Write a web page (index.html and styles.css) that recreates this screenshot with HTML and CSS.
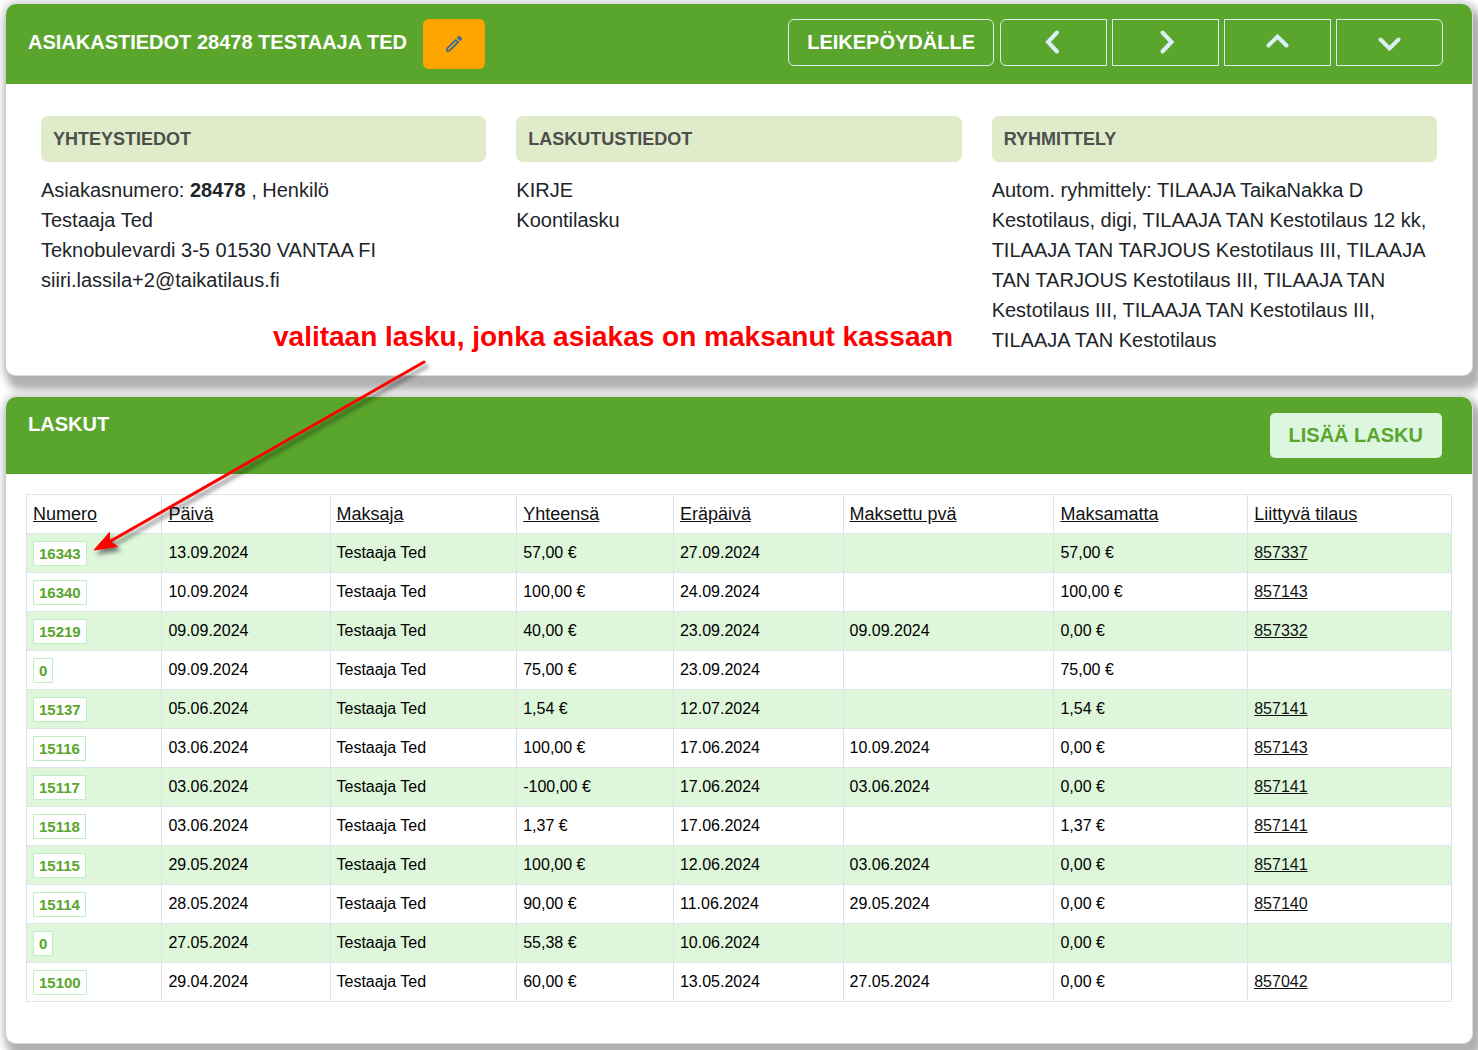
FILE: index.html
```html
<!DOCTYPE html>
<html lang="fi">
<head>
<meta charset="utf-8">
<meta name="viewport" content="width=device-width, initial-scale=1">
<title>Asiakastiedot 28478 Testaaja Ted</title>
<link rel="stylesheet" href="styles.css">
</head>
<body>
<main class="page">
  <section class="card">
    <header class="card-header">
      <h2 class="card-title">ASIAKASTIEDOT 28478 TESTAAJA TED</h2>
      <button class="btn-edit" type="button" aria-label="Muokkaa">
        <svg width="18" height="18" viewBox="0 0 18 18" aria-hidden="true"><path d="M1.200 16.800V13.300L10.800 3.700L14.300 7.200L4.700 16.800Z" fill="#2f6a9c"/><path d="M3 14.900L11.400 6.500" fill="none" stroke="#ffa500" stroke-width="1.500"/><path d="M11.800 2.700L13.200 1.300Q14 .6 14.800 1.300L16.700 3.200Q17.400 4 16.700 4.800L15.300 6.200Z" fill="#2f6a9c"/></svg>
      </button>
      <div class="actions">
        <button class="btn-outline btn-clip" type="button">LEIKEPÖYDÄLLE</button>
        <div class="nav-group">
          <button class="btn-outline btn-nav" type="button" aria-label="Edellinen"><svg width="26" height="26" viewBox="0 0 26 26"><path d="M16 3.500L7 13L16 22.500"/></svg></button>
          <button class="btn-outline btn-nav" type="button" aria-label="Seuraava"><svg width="26" height="26" viewBox="0 0 26 26"><path d="M9.500 3.500L18.500 13L9.500 22.500"/></svg></button>
          <button class="btn-outline btn-nav" type="button" aria-label="Ylös"><svg width="26" height="26" viewBox="0 0 26 26"><path d="M3.500 16.500L12.500 7.500L21.500 16.500"/></svg></button>
          <button class="btn-outline btn-nav" type="button" aria-label="Alas"><svg width="26" height="26" viewBox="0 0 26 26"><path d="M3.500 10.500L12.500 19.500L21.500 10.500"/></svg></button>
        </div>
      </div>
    </header>
    <div class="info">
      <div class="info-col">
        <h3 class="info-title">YHTEYSTIEDOT</h3>
        <p>Asiakasnumero: <strong>28478</strong> , Henkilö<br>Testaaja Ted<br>Teknobulevardi 3-5 01530 VANTAA FI<br>siiri.lassila+2@taikatilaus.fi</p>
      </div>
      <div class="info-col">
        <h3 class="info-title">LASKUTUSTIEDOT</h3>
        <p>KIRJE<br>Koontilasku</p>
      </div>
      <div class="info-col">
        <h3 class="info-title">RYHMITTELY</h3>
        <p>Autom. ryhmittely: TILAAJA TaikaNakka D Kestotilaus, digi, TILAAJA TAN Kestotilaus 12 kk, TILAAJA TAN TARJOUS Kestotilaus III, TILAAJA TAN TARJOUS Kestotilaus III, TILAAJA TAN Kestotilaus III, TILAAJA TAN Kestotilaus III, TILAAJA TAN Kestotilaus</p>
      </div>
    </div>
  </section>

  <section class="card">
    <header class="card-header card-header-list">
      <h2 class="card-title">LASKUT</h2>
      <button class="btn-add" type="button">LISÄÄ LASKU</button>
    </header>
    <div class="table-wrap">
      <table class="invoices">
        <colgroup>
          <col class="c-num"><col class="c-date"><col class="c-payer"><col class="c-total"><col class="c-due"><col class="c-paid"><col class="c-open"><col class="c-order">
        </colgroup>
        <thead>
          <tr><th><a href="#">Numero</a></th><th><a href="#">Päivä</a></th><th><a href="#">Maksaja</a></th><th><a href="#">Yhteensä</a></th><th><a href="#">Eräpäivä</a></th><th><a href="#">Maksettu pvä</a></th><th><a href="#">Maksamatta</a></th><th><a href="#">Liittyvä tilaus</a></th></tr>
        </thead>
        <tbody>
          <tr><td><a class="num" href="#">16343</a></td><td>13.09.2024</td><td>Testaaja Ted</td><td>57,00 €</td><td>27.09.2024</td><td></td><td>57,00 €</td><td><a href="#">857337</a></td></tr>
          <tr><td><a class="num" href="#">16340</a></td><td>10.09.2024</td><td>Testaaja Ted</td><td>100,00 €</td><td>24.09.2024</td><td></td><td>100,00 €</td><td><a href="#">857143</a></td></tr>
          <tr><td><a class="num" href="#">15219</a></td><td>09.09.2024</td><td>Testaaja Ted</td><td>40,00 €</td><td>23.09.2024</td><td>09.09.2024</td><td>0,00 €</td><td><a href="#">857332</a></td></tr>
          <tr><td><a class="num" href="#">0</a></td><td>09.09.2024</td><td>Testaaja Ted</td><td>75,00 €</td><td>23.09.2024</td><td></td><td>75,00 €</td><td></td></tr>
          <tr><td><a class="num" href="#">15137</a></td><td>05.06.2024</td><td>Testaaja Ted</td><td>1,54 €</td><td>12.07.2024</td><td></td><td>1,54 €</td><td><a href="#">857141</a></td></tr>
          <tr><td><a class="num" href="#">15116</a></td><td>03.06.2024</td><td>Testaaja Ted</td><td>100,00 €</td><td>17.06.2024</td><td>10.09.2024</td><td>0,00 €</td><td><a href="#">857143</a></td></tr>
          <tr><td><a class="num" href="#">15117</a></td><td>03.06.2024</td><td>Testaaja Ted</td><td>-100,00 €</td><td>17.06.2024</td><td>03.06.2024</td><td>0,00 €</td><td><a href="#">857141</a></td></tr>
          <tr><td><a class="num" href="#">15118</a></td><td>03.06.2024</td><td>Testaaja Ted</td><td>1,37 €</td><td>17.06.2024</td><td></td><td>1,37 €</td><td><a href="#">857141</a></td></tr>
          <tr><td><a class="num" href="#">15115</a></td><td>29.05.2024</td><td>Testaaja Ted</td><td>100,00 €</td><td>12.06.2024</td><td>03.06.2024</td><td>0,00 €</td><td><a href="#">857141</a></td></tr>
          <tr><td><a class="num" href="#">15114</a></td><td>28.05.2024</td><td>Testaaja Ted</td><td>90,00 €</td><td>11.06.2024</td><td>29.05.2024</td><td>0,00 €</td><td><a href="#">857140</a></td></tr>
          <tr><td><a class="num" href="#">0</a></td><td>27.05.2024</td><td>Testaaja Ted</td><td>55,38 €</td><td>10.06.2024</td><td></td><td>0,00 €</td><td></td></tr>
          <tr><td><a class="num" href="#">15100</a></td><td>29.04.2024</td><td>Testaaja Ted</td><td>60,00 €</td><td>13.05.2024</td><td>27.05.2024</td><td>0,00 €</td><td><a href="#">857042</a></td></tr>
        </tbody>
      </table>
    </div>
  </section>

  <div class="note">
    <p class="note-text">valitaan lasku, jonka asiakas on maksanut kassaan</p>
    <svg class="note-arrow" width="350" height="210" viewBox="0 0 350 210" aria-hidden="true"><path d="M333 12L18 192" stroke="#f00" stroke-width="3" stroke-linecap="round"/><path d="M3 200L18.500 182.500L18.500 191L26.500 196.500Z" fill="#f00" stroke="#f00" stroke-width="1"/></svg>
  </div>
</main>
</body>
</html>
```

FILE: styles.css
```css
* {
  box-sizing: border-box;
}

body {
  margin: 0;
  background: #fff;
  color: #212529;
  font-family: "Liberation Sans", Arial, sans-serif;
  font-size: 20px;
  line-height: 30px;
}

h2, h3, p {
  margin: 0;
}

button {
  font: inherit;
  cursor: pointer;
}

.page {
  position: relative;
  display: flex;
  flex-direction: column;
  gap: 21px;
  padding: 4px 5px 7px 6px;
  overflow: hidden;
}

.card {
  background: #fff;
  border: 1px solid #dcdcdc;
  border-width: 0 1px 1px 0;
  border-radius: 10px;
  box-shadow: 5px 10px 8px 4px #b0b0b0, 0 0 8px 2px #c8c8c8;
}

.card-header {
  display: flex;
  align-items: flex-start;
  min-height: 80px;
  padding: 15px 29px 15px 22px;
  border-radius: 10px 10px 0 0;
  background: #5aa52c;
}

.card-header-list {
  justify-content: space-between;
  min-height: 77px;
  padding: 16px 30px 16px 22px;
}

.card-title {
  padding: 8px 0;
  color: #fff;
  font-size: 20px;
  line-height: 30px;
}

.card-header-list .card-title {
  padding: 0;
  line-height: 22px;
}

.btn-edit {
  width: 62px;
  height: 50px;
  margin-left: 16px;
  padding: 0;
  border: 0;
  border-radius: 6px;
  background: #ffa500;
}

.btn-edit svg {
  display: block;
  margin: 0 auto;
}

.actions {
  display: flex;
  gap: 6px;
  margin-left: auto;
}

.nav-group {
  display: flex;
  gap: 5px;
}

.btn-outline {
  height: 47px;
  padding: 0 18px 2px;
  border: 1px solid #dbf0f0;
  background: transparent;
  color: #fff;
  font-weight: bold;
}

.btn-clip {
  border-radius: 6px;
}

.btn-nav {
  width: 107px;
}

.btn-nav svg {
  display: block;
  margin: 0 auto;
  fill: none;
  stroke: #daf0f7;
  stroke-width: 4;
  stroke-linecap: round;
}

.btn-nav:first-child {
  border-radius: 6px 0 0 6px;
}

.btn-nav:last-child {
  border-radius: 0 6px 6px 0;
}

.btn-add {
  height: 45px;
  padding: 0 19px 2px;
  border: 0;
  border-radius: 5px;
  background: #dcf6e0;
  color: #5aa52c;
  font-weight: bold;
}

.info {
  display: grid;
  grid-template-columns: repeat(3, 1fr);
  gap: 30px;
  padding: 32px 35px 20px;
}

.info-title {
  margin-bottom: 13px;
  padding: 8px 12px;
  border-radius: 7px;
  background: #dfebc9;
  color: #4e4e4e;
  font-size: 18px;
  line-height: 30px;
}

.table-wrap {
  padding: 20px 20px 41px;
}

.invoices {
  width: 100%;
  border-collapse: collapse;
  table-layout: fixed;
  color: #000;
  font-size: 16px;
  line-height: 24px;
}

.c-num { width: 9.5%; }
.c-date { width: 11.8%; }
.c-payer { width: 13.1%; }
.c-total { width: 11%; }
.c-due { width: 11.9%; }
.c-paid { width: 14.8%; }
.c-open { width: 13.6%; }

.invoices th,
.invoices td {
  height: 39px;
  padding: 0 6px;
  border: 1px solid #d9e8f0;
  border-right-color: #dee2e6;
  border-left-color: #dee2e6;
  text-align: left;
  vertical-align: middle;
}

.invoices th {
  font-size: 18px;
  font-weight: normal;
}

.invoices a {
  color: #111;
  text-decoration: underline;
}

.invoices tbody tr:nth-child(odd) {
  background: #def6da;
}

.invoices .num {
  display: block;
  width: fit-content;
  padding: 0 5px;
  border: 1px solid #bdeec4;
  background: #fff;
  color: #5aa52c;
  font-size: 15px;
  font-weight: bold;
  line-height: 23px;
  text-decoration: none;
}

/* Instruction drawn over both cards */
.note {
  position: absolute;
  top: 321px;
  left: 273px;
  color: #f00;
  pointer-events: none;
}

.note-text {
  font-size: 28px;
  font-weight: bold;
  line-height: 32px;
  white-space: nowrap;
}

.note-arrow {
  position: absolute;
  top: 29px;
  left: -182px;
  overflow: visible;
  filter: drop-shadow(3px 4px 2px rgba(0, 0, 0, 0.5));
}
```
